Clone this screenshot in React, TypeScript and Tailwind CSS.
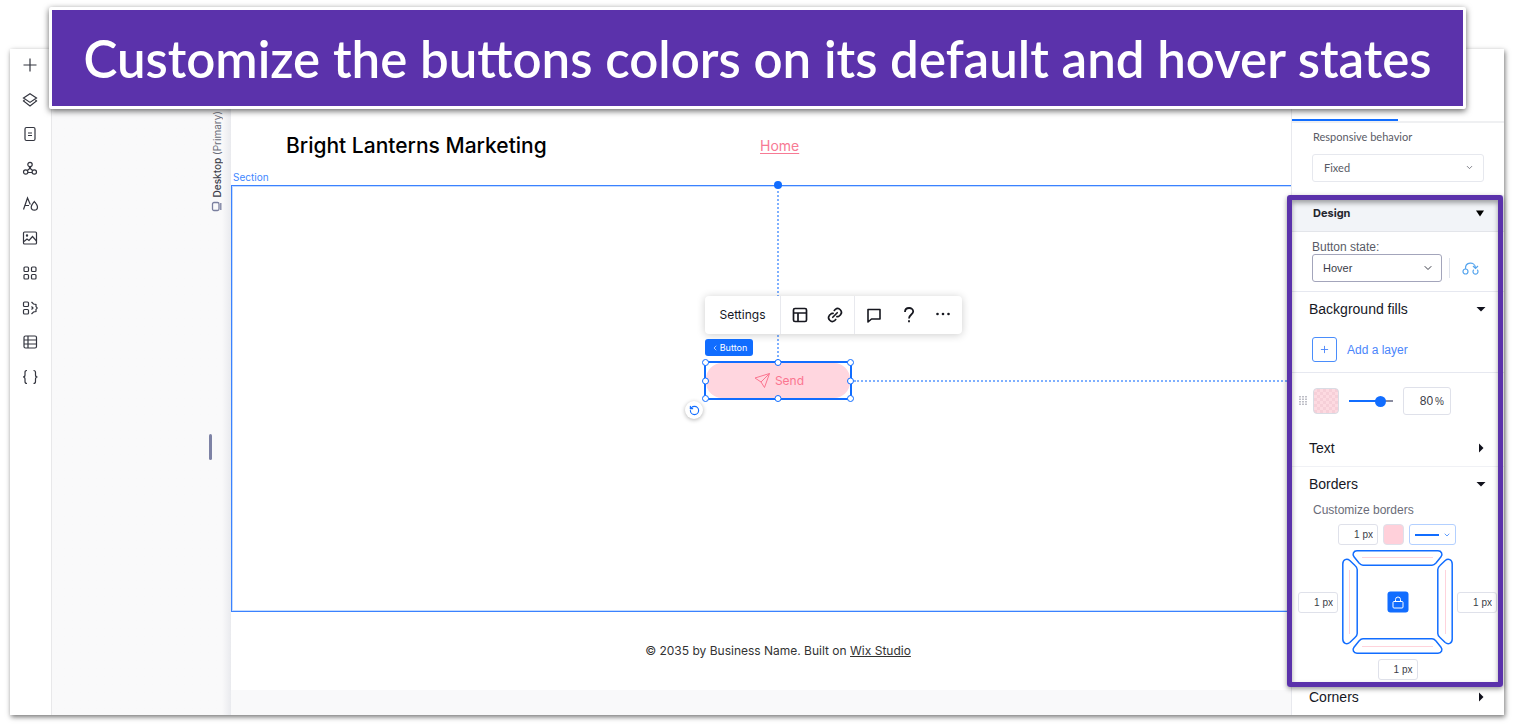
import type { ReactNode } from "react";
import { useState } from "react";
import { ChevronDown, ChevronLeft, Plus, RotateCcw } from "lucide-react";

const TOOLS: { label: string; icon: ReactNode }[] = [
  { label: "Add elements", icon: <path d="M10 3.5v13M3.5 10h13" /> },
  { label: "Layers", icon: <path d="M10 3.7 16.5 8 10 12.4 3.5 8zM4.500 10 3.500 11l6.500 5 6.500-5-1-1" /> },
  { label: "Pages", icon: <><rect x="5" y="3.500" width="10" height="13" rx="1.500" /><path d="M8 9h4M8 11.500h4" /></> },
  {
    label: "Site styles",
    icon: <><circle cx="10" cy="5.500" r="2.200" /><circle cx="5.700" cy="13" r="2.200" /><circle cx="14.300" cy="13" r="2.200" /><path d="M9.500 7.700v2L7.300 11.500M10.500 7.700v2L12.700 11.500M8 13.500h4" /></>,
  },
  { label: "Theme", icon: <path d="M3.500 15.500 7.500 4l2.800 6.500M5 11.500h4M14.300 7.500c2 2.500 3.200 3.700 3.200 5.400a3.100 3.100 0 0 1-6.300 0c0-1.700 1.200-2.900 3.100-5.400z" /> },
  { label: "Media", icon: <><rect x="3.500" y="4" width="13" height="12" rx="1" /><path d="m4 13.500 3-2.500 2 1.500 3.500-4 4 4.500" /><circle cx="7" cy="7.500" r=".600" /></> },
  { label: "Apps", icon: <><rect x="4" y="4" width="4.500" height="4.500" rx="1" /><rect x="11.500" y="4" width="4.500" height="4.500" rx="1" /><rect x="4" y="11.500" width="4.500" height="4.500" rx="1" /><rect x="11.500" y="11.500" width="4.500" height="4.500" rx="1" /></> },
  { label: "App market", icon: <><rect x="3.500" y="4" width="5" height="4.500" rx="1" /><rect x="3.500" y="11.500" width="5" height="4.500" rx="1" /><path d="m11.500 4 2 2 2.500.500v2l1.200 1.500-1.200 1.500v2l-2.500.500-2 2M11.500 8.500l1.500 1.500-1.500 1.500" /></> },
  { label: "CMS", icon: <><rect x="4" y="4" width="12.500" height="12" rx="1.500" /><path d="M4 8h12.500M4 12h12.500M8 4v12" /></> },
  { label: "Code", icon: <path d="M7 3.500c-2 0-2 .700-2 2v2.500c0 1.200-.500 2-2 2 1.500 0 2 .800 2 2v2.500c0 1.300 0 2 2 2M13.500 3.500c2 0 2 .700 2 2v2.500c0 1.200.500 2 2 2-1.500 0-2 .800-2 2v2.500c0 1.300 0 2-2 2" /> },
];

const HANDLES = [
  "-left-1 -top-1",
  "left-1/2 -top-1 -translate-x-1/2",
  "-right-1 -top-1",
  "-left-1 top-1/2 -translate-y-1/2",
  "-right-1 top-1/2 -translate-y-1/2",
  "-left-1 -bottom-1",
  "left-1/2 -bottom-1 -translate-x-1/2",
  "-right-1 -bottom-1",
];

const FIELD = "rounded-[3px] border border-[#dfe1ea] bg-white text-right text-[10px] text-[#3b3d48] outline-none";

function ToolBar() {
  return (
    <nav aria-label="Editor tools" className="w-[42px] shrink-0 border-r border-[#e8e8ea] bg-white pt-1.5 pr-px">
      <div className="flex h-[332px] flex-col items-center justify-between">
        {TOOLS.map((tool) => (
          <button key={tool.label} aria-label={tool.label} className="text-[#33353f]">
            <svg width="20" height="20" viewBox="0 0 20 20" fill="none" stroke="currentColor" strokeWidth="1.200">
              {tool.icon}
            </svg>
          </button>
        ))}
      </div>
    </nav>
  );
}

function Gutter() {
  return (
    <div className="flex w-[179px] shrink-0 flex-col items-end bg-linear-to-r from-[#f9f9fa] from-95% to-[#e9eaee] pt-[56px]">
      <div className="flex h-[107px] flex-col items-center justify-end pr-1.5 text-[10px] leading-4 text-[#6a6c78]">
        <span className="rotate-180 whitespace-nowrap [writing-mode:vertical-rl]">
          <b className="font-medium text-[#3c3e4a]">Desktop</b> (Primary)
        </span>
        <svg className="mt-1" width="12" height="11" viewBox="0 0 12 11" fill="none" stroke="#7a7f9f" strokeWidth="1.300">
          <rect x="1.500" y="1.500" width="6.500" height="8" rx="1.500" />
          <path d="M9.800 2v7" />
        </svg>
      </div>
      <div className="mt-[222px] mr-[19px] h-[26px] w-[3px] rounded-full bg-[#7d82a5]" />
    </div>
  );
}

function FloatingBar() {
  return (
    <div className="absolute bottom-full -left-px mb-[29px] flex h-[38px] w-[257px] rounded bg-white text-[#16171f] shadow-[0_1px_8px_rgba(0,0,0,0.2)]">
      <button className="w-[76px] border-r border-[#e8e9ee] text-xs">Settings</button>
      <div className="flex w-[74px] items-center justify-around border-r border-[#e8e9ee] px-0.5">
        <button aria-label="Layout">
          <svg width="18" height="18" viewBox="0 0 18 18" fill="none" stroke="currentColor" strokeWidth="1.700">
            <rect x="2.500" y="2.500" width="13" height="13" rx="1.500" />
            <path d="M2.500 7h13M7 7v8.500" />
          </svg>
        </button>
        <button aria-label="Link">
          <svg width="18" height="18" viewBox="0 0 24 24" fill="none" stroke="currentColor" strokeWidth="2.200" strokeLinecap="round">
            <path d="m9 15 6-6M11 6l1.500-1.500a5 5 0 0 1 7 7L18 13a4 4 0 0 1-3.500 1.200M13 18l-1.500 1.500a5 5 0 0 1-7-7L6 11a4 4 0 0 1 3.500-1.200" />
          </svg>
        </button>
      </div>
      <div className="flex flex-1 items-center justify-around pr-0.5">
        <button aria-label="Comment">
          <svg width="18" height="18" viewBox="0 0 18 18" fill="none" stroke="currentColor" strokeWidth="1.600" strokeLinejoin="round">
            <path d="M3 3.500h12v9.500H6.500L3 16z" />
          </svg>
        </button>
        <button aria-label="Help">
          <svg width="14" height="18" viewBox="0 0 14 18" fill="none" stroke="currentColor" strokeWidth="1.800">
            <path d="M3 6c0-5.300 8.200-5.200 8.200-.500C11.200 8.500 7 8.500 7 12.500" />
            <path d="M7 14.200v2" />
          </svg>
        </button>
        <button aria-label="More">
          <svg width="16" height="16" viewBox="0 0 16 16" fill="currentColor">
            <circle cx="2.500" cy="7" r="1.300" /><circle cx="8" cy="7" r="1.300" /><circle cx="13.500" cy="7" r="1.300" />
          </svg>
        </button>
      </div>
    </div>
  );
}

function SelectedButton() {
  return (
    <div className="absolute top-[175px] left-1/2 h-[39px] w-[148px] -translate-x-1/2 border-2 border-[#116dff]">
      <button className="flex size-full items-center justify-center gap-1 rounded-2xl bg-[#ffd6df] pl-0.5 text-xs text-[#fb7590]">
        <svg width="17" height="17" viewBox="0 0 17 17" fill="none" stroke="currentColor" strokeLinejoin="round">
          <path d="M1 6 15.500 1.500 10.500 15.500 7 10zM15.500 1.500 7 10" />
        </svg>
        Send
      </button>
      {HANDLES.map((place) => (
        <span key={place} className={`absolute size-[7px] rounded-full border border-[#116dff] bg-white ${place}`} />
      ))}
      <FloatingBar />
      <button className="absolute bottom-full -left-px mb-[7px] flex h-[17px] w-12 items-center justify-center gap-px rounded-[3px] bg-[#116dff] text-[9px] text-white">
        <ChevronLeft size={8} />
        Button
      </button>
      <button aria-label="Reset" className="absolute top-full right-full mt-[3px] mr-[3px] flex size-[18px] items-center justify-center rounded-full bg-white text-[#116dff] shadow-[0_1px_4px_rgba(0,0,0,0.3)]">
        <RotateCcw size={11} strokeWidth={2.500} />
      </button>
      <span className="absolute top-[17px] left-full ml-1 w-[440px] border-t-2 border-dotted border-[#7fb0ff]" />
    </div>
  );
}

function Canvas() {
  return (
    <main className="min-w-0 flex-1 overflow-hidden bg-[#f9f9fa]">
      {/* the page runs on under the inspector */}
      <div className="-mr-[34px] bg-white">
        <header className="grid grid-cols-[474px_1fr] items-center pt-[82px] pl-[55px]">
          <h1 className="text-[21px] leading-[30px] font-medium text-black">Bright Lanterns Marketing</h1>
          <a href="#home" className="text-sm text-[#f77a94] underline underline-offset-2">Home</a>
        </header>
        <div className="mt-2 pl-0.5 text-[10px] leading-4 text-[#3f88ff]">Section</div>
        <section className="relative h-[427px] border border-[#3b82ff] shadow-[inset_0_0_0_1px_#c4dbff]">
          <span className="absolute top-0 left-1/2 h-[175px] -translate-x-1/2 border-l-2 border-dotted border-[#7fb0ff]" />
          <span className="absolute -top-[5px] left-1/2 size-2 -translate-x-1/2 rounded-full bg-[#116dff]" />
          <SelectedButton />
        </section>
        <footer className="flex h-[78px] items-center justify-center text-xs text-[#333]">
          <p>© 2035 by Business Name. Built on <a href="#studio" className="underline">Wix Studio</a></p>
        </footer>
      </div>
    </main>
  );
}

function Arrow({ open }: { open?: boolean }) {
  return (
    <svg width="10" height="10" viewBox="0 0 10 10" fill="#10111c">
      {open ? <path d="M.500 3h9L5 7.500z" /> : <path d="M3 .500v9L7.500 5z" />}
    </svg>
  );
}

function GroupRow({ title, open, className }: { title: string; open?: boolean; className: string }) {
  return (
    <button className={`flex w-full items-center justify-between pr-[18px] pl-[17px] text-sm text-[#16171f] ${className}`}>
      {title}
      <Arrow open={open} />
    </button>
  );
}

function BorderField({ side }: { side: string }) {
  return <input aria-label={`${side} border`} defaultValue="1 px" className={`h-[21px] w-10 shrink-0 pr-1 ${FIELD}`} />;
}

function BorderBox() {
  return (
    <div className="relative h-[104px] w-[111px]">
      <svg width="111" height="104" viewBox="0 0 111 104" fill="none" stroke="#116dff" strokeWidth="1.500">
        <path d="M15 .800h81c3.500 0 5 3.500 3 6l-5 6.200q-2 2.200-4 2.200H21q-2 0-4-2.200l-5-6.200c-2-2.500-.500-6 3-6z" />
        <path d="M15 103.200h81c3.500 0 5-3.500 3-6l-5-6.200q-2-2.200-4-2.200H21q-2 0-4 2.200l-5 6.200c-2 2.500-.500 6 3 6z" />
        <path d="M.800 14v75c0 4.500 4 6 7 3.500l5.200-5q2.200-2 2.200-4v-64q0-2-2.200-4l-5.200-5C4.800 8 .800 9.500.800 14z" />
        <path d="M110.200 14v75c0 4.500-4 6-7 3.500l-5.200-5q-2.200-2-2.200-4v-64q0-2 2.200-4l5.200-5c3-2.500 7-1 7 3.500z" />
        <path d="M20 7.500h71M20 96.500h71M7.500 20v64M103.500 20v64" stroke="#ffd3dc" strokeWidth="1" />
      </svg>
      <button aria-label="Lock borders" className="absolute top-1/2 left-1/2 flex size-[21px] -translate-1/2 items-center justify-center rounded-[3px] bg-[#116dff]">
        <svg width="13" height="14" viewBox="0 0 13 14" fill="none" stroke="#fff">
          <rect x="1.500" y="6" width="10" height="6.500" rx="1" />
          <path d="M4 6V4a2.500 2.500 0 0 1 5 0v2" />
        </svg>
      </button>
    </div>
  );
}

function DesignSection() {
  const [opacity, setOpacity] = useState(80);

  return (
    <section className="relative font-['Liberation_Sans',sans-serif]">
      <button className="flex h-[37px] w-full items-center justify-between border-b border-[#e3e5ea] bg-[#f2f4f8] pr-5 pl-[21px] font-['Inter',sans-serif] text-[11px] font-bold text-[#24262e]">
        Design
        <svg width="8" height="7" viewBox="0 0 8 7"><path d="M0 .500h8L4 6.500z" /></svg>
      </button>

      <div className="border-b border-[#e6e8f0] px-5 pt-2 pb-[9px]">
        <label htmlFor="state" className="block text-xs leading-[14px] text-[#595b66]">Button state:</label>
        <div className="flex items-center">
          <div className="relative w-[130px]">
            <select id="state" defaultValue="Hover" className="h-7 w-full appearance-none rounded-[3px] border border-[#a3a5bb] bg-white pl-2.5 text-[11px] text-[#3b3d48]">
              <option>Default</option>
              <option>Hover</option>
            </select>
            <ChevronDown size={12} className="pointer-events-none absolute top-2 right-2 text-[#3b3d48]" />
          </div>
          <span className="ml-[7px] h-5 border-l border-[#e0e4ec]" />
          <button aria-label="Transition" className="ml-3 text-[#56a5ee]">
            <svg width="17" height="14" viewBox="0 0 17 14" fill="none" stroke="currentColor" strokeWidth="1.200">
              <circle cx="3.500" cy="10.500" r="2.500" />
              <path d="M3.500 8C3 .500 13 .500 13.500 6.500M11 5l2.500 2.500L16 5M11.800 8.800a2.500 2.500 0 1 0 3.400 0" />
            </svg>
          </button>
        </div>
      </div>

      <div className="border-b border-[#e6e8f0] pb-[10px]">
        <GroupRow title="Background fills" open className="h-[33px]" />
        <button className="mt-3 ml-5 flex items-center gap-[10px] text-xs text-[#4a85fb]">
          <span className="flex size-[25px] items-center justify-center rounded-[3px] border border-[#4a8dfb]">
            <Plus size={11} strokeWidth={2} />
          </span>
          Add a layer
        </button>
      </div>

      <div className="flex h-[56px] items-center pl-[7px]">
        <svg width="8" height="10" viewBox="0 0 8 10" stroke="#a9abb5" strokeWidth="1.500" strokeDasharray="1.500 1">
          <path d="M1 0v10M4 0v10M7 0v10" />
        </svg>
        <button aria-label="Fill color" className="ml-1.5 size-[26px] rounded border border-[#d9dce4] bg-[#fbd3db] bg-[repeating-conic-gradient(#f6cfd8_0_25%,#fddae1_0_50%)] bg-size-[6px_6px]" />
        <input
          type="range"
          aria-label="Opacity"
          value={opacity}
          onChange={(e) => setOpacity(Number(e.target.value))}
          className="ml-[10px] h-3 w-11 appearance-none bg-[linear-gradient(to_right,#116dff_75%,#8a8ca0_75%)] bg-size-[100%_2px] bg-center bg-no-repeat [&::-webkit-slider-thumb]:size-[11px] [&::-webkit-slider-thumb]:appearance-none [&::-webkit-slider-thumb]:rounded-full [&::-webkit-slider-thumb]:bg-[#116dff]"
        />
        <label className={`ml-[10px] flex h-7 w-12 items-center justify-end gap-0.5 pr-1.5 ${FIELD}`}>
          <input
            aria-label="Opacity percent"
            value={opacity}
            onChange={(e) => setOpacity(Number(e.target.value) || 0)}
            className="w-full min-w-0 text-right text-xs outline-none"
          />
          <span>%</span>
        </label>
      </div>

      <GroupRow title="Text" className="h-[38px] border-b border-[#f0f1f5]" />
      <GroupRow title="Borders" open className="h-[34px]" />

      <div className="pb-[7px] pl-1.5">
        <p className="pl-[15px] text-xs leading-[18px] text-[#6a6c78]">Customize borders</p>
        <div className="mt-[5px] flex gap-[5px] pl-10">
          <BorderField side="Top" />
          <button aria-label="Border color" className="size-[21px] rounded border border-[#dfe1ea] bg-[#ffd0da]" />
          <button aria-label="Border style" className="flex h-[21px] w-[47px] items-center justify-center gap-1 rounded-[3px] border border-[#b3d0ff] text-[#116dff]">
            <span className="w-6 border-t-2" />
            <ChevronDown size={8} />
          </button>
        </div>
        <div className="mt-[5px] flex items-center gap-1">
          <BorderField side="Left" />
          <BorderBox />
          <BorderField side="Right" />
        </div>
        <div className="mt-[5px] flex w-[199px] justify-center">
          <BorderField side="Bottom" />
        </div>
      </div>

      {/* highlight frame */}
      <div className="pointer-events-none absolute inset-y-0 right-px -left-[5px] rounded-[3px] border-[5px] border-[#5b32ab] shadow-[0_2px_5px_rgba(0,0,0,0.4),inset_0_3px_5px_rgba(0,0,0,0.35)]" />
    </section>
  );
}

function Inspector() {
  return (
    <aside className="relative w-[213px] shrink-0 border-l border-[#e8e9ee] bg-white">
      <div className="flex h-[74px] border-b-2 border-[#eff0f2]">
        <div className="w-1/2 border-b-2 border-[#116dff]" />
      </div>
      <div className="px-5 pt-1.5 pb-[13px] font-['Lato',sans-serif] text-[#595b66]">
        <label htmlFor="behavior" className="block pl-px text-[11px] leading-4">Responsive behavior</label>
        <div className="relative mt-[9px]">
          <select id="behavior" defaultValue="Fixed" className="h-7 w-full appearance-none rounded-[3px] border border-[#e6e8ee] bg-white pl-[11px] text-[11px]">
            <option>Fixed</option>
            <option>Scale</option>
          </select>
          <ChevronDown size={9} className="pointer-events-none absolute top-[9px] right-[10px]" />
        </div>
      </div>
      <DesignSection />
      <GroupRow title="Corners" className="mb-2 h-5 font-['Liberation_Sans',sans-serif]" />
    </aside>
  );
}

function App() {
  return (
    <div className="relative bg-white px-2.5 pt-[49px] pb-[13px] font-['Inter',sans-serif]">
      <div className="flex bg-white shadow-[1px_2px_5px_rgba(0,0,0,0.55)]">
        <ToolBar />
        <Gutter />
        <Canvas />
        <Inspector />
      </div>
      <div className="absolute top-[7px] right-12 left-[49px] flex h-[102px] items-center justify-center rounded-[2px] border-[3px] border-white bg-[#5b32ab] shadow-[0_2px_6px_rgba(0,0,0,0.6)]">
        <p className="font-['Lato',sans-serif] text-[51px] leading-none font-semibold whitespace-nowrap text-white">
          Customize the buttons colors on its default and hover states
        </p>
      </div>
    </div>
  );
}

export default App;
